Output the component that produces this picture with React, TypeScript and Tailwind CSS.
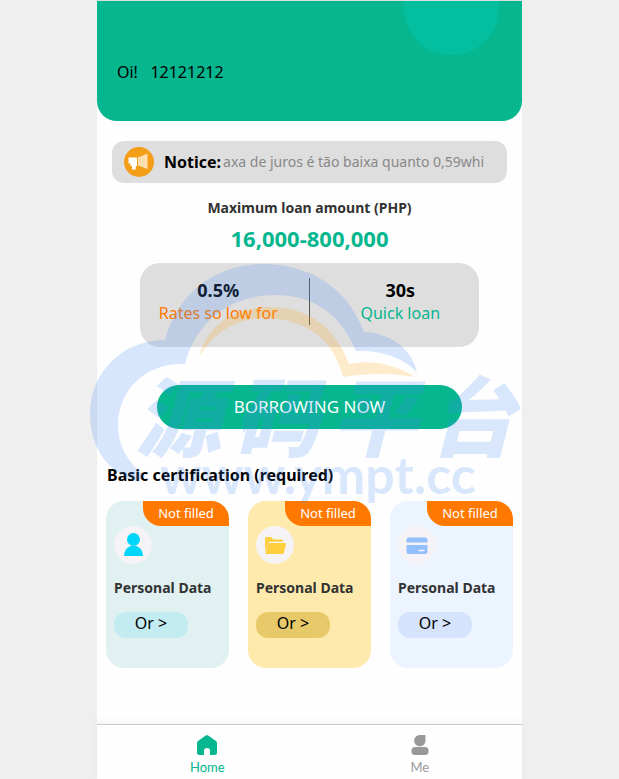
import React from "react";

type Certification = {
  id: string;
  card: string;
  pill: string;
  icon: React.ReactNode;
};

const certifications: Certification[] = [
  {
    id: "profile",
    card: "bg-[#e1f0f1]",
    pill: "bg-[#c3ecf2]",
    icon: (
      <svg viewBox="0 0 38 38" className="size-[38px]" fill="#00d5fa" aria-hidden="true">
        <circle cx="19.500" cy="13.500" r="6.500" />
        <path d="M10 30c.3-5.500 3-8.500 6.500-10h6c3.500 1.500 6.200 4.500 6.500 10z" />
      </svg>
    ),
  },
  {
    id: "documents",
    card: "bg-[#feeaad]",
    pill: "bg-[#e8c96a]",
    icon: (
      <svg viewBox="0 0 38 38" className="size-[38px]" fill="#ffcf40" aria-hidden="true">
        <path d="M9 25V12.500Q9 11 10.500 11H15l2.500 2.500h8.500q1 0 1 1.500v.7H14.500q-1.500 0-2 1.300z" />
        <path d="M13.500 17H29q1.300 0 1 1.200l-2 8.300q-.4 1.500-2 1.500H10.500q-1.300 0-1-1.200l2.300-8.500Q12.200 17 13.500 17z" />
      </svg>
    ),
  },
  {
    id: "bank",
    card: "bg-[#ebf4ff]",
    pill: "bg-[#d5e3fc]",
    icon: (
      <svg viewBox="0 0 38 38" className="size-[38px]" fill="#94bfff" aria-hidden="true">
        <path d="M8.500 16.500v-2.500q0-2.500 2.500-2.500h16q2.500 0 2.500 2.500v2.500z" />
        <path
          fillRule="evenodd"
          d="M8.500 19h21v6.500q0 2.500-2.500 2.500H11q-2.500 0-2.500-2.500zM20.500 23.700v1.600h6v-1.600z"
        />
      </svg>
    ),
  },
];

function NoticeBar() {
  return (
    <section className="mx-[15px] mt-5 flex h-[42px] items-center rounded-xl bg-[#dedede] pl-3 pr-4">
      <svg viewBox="0 0 30 30" className="mr-[10px] size-[30px] shrink-0" aria-hidden="true">
        <circle cx="15" cy="15" r="15" fill="#f49d16" />
        <path d="M4.500 10.500H13v8.500h-1.200v3.500H8V19H6.500v-2.500h-2z" fill="#fff" />
        <path d="M14 10.500l9.500-4v15.500L14 18.500z" fill="#fde0b0" />
      </svg>
      <strong className="mr-0.5 shrink-0 text-base font-bold">Notice:</strong>
      <span className="overflow-hidden whitespace-nowrap text-sm text-[#888]">
        axa de juros é tão baixa quanto 0,59whi
      </span>
    </section>
  );
}

function Card({ id, card, pill, icon }: Certification) {
  return (
    <article className={`h-[167px] overflow-hidden rounded-[18px] ${card}`}>
      <div className="ml-auto flex h-[25px] w-[86px] items-center justify-center rounded-bl-[18px] bg-[#ff7800] text-[13px] text-white">
        Not filled
      </div>
      <div className="px-2">
        <div className="size-[38px] rounded-full bg-[#f5f3f5]">{icon}</div>
        <h3 id={id} className="mt-3 whitespace-nowrap text-sm leading-6 font-bold text-[#333]">
          Personal Data
        </h3>
        <button
          aria-describedby={id}
          className={`mt-3 flex h-[26px] w-[74px] items-center justify-center rounded-xl pb-1 text-base ${pill}`}
        >
          Or &gt;
        </button>
      </div>
    </article>
  );
}

function Watermark() {
  return (
    <div className="pointer-events-none absolute top-[264px] -left-2 w-[440px] select-none" aria-hidden="true">
      <svg viewBox="89 264 440 224" className="block w-full">
        <path
          fill="#468cf5"
          fillOpacity=".21"
          d="M165 340C178 292 216 264 265 264C310 265 347 287 364 332C390 333 412 349 417 372C402 357 381 350 356 351C341 315 315 295 275 295C231 295 196 321 185 364C145 362 118 391 118 425C118 443 125 457 137 469L143 475L139 482C108 474 90 447 90 414C90 374 121 340 165 340Z"
        />
        <path
          fill="#ffa30f"
          fillOpacity=".21"
          d="M199 357C207 325 235 307 270 307C308 307 336 328 349 364C375 359 397 366 415 377C393 373 367 373 343 377C334 340 307 319 265 318C235 318 213 334 199 357Z"
        />
      </svg>
      <div className="absolute top-[106px] left-[46px] flex gap-3 whitespace-nowrap font-['Noto_Sans_CJK_SC',sans-serif] text-[86px] leading-[86px] font-black text-[#468cf5]/20 italic">
        <span>源</span>
        <span>码</span>
        <span>平</span>
        <span>台</span>
      </div>
      <div className="absolute top-[182px] left-[71px] whitespace-nowrap font-[Lato,sans-serif] text-[52px] leading-[56px] font-bold text-[#468cf5]/20">
        www.ympt.cc
      </div>
    </div>
  );
}

export default function App() {
  return (
    <div className="min-h-screen overflow-x-clip bg-[#efefef] font-['Noto_Sans','Noto_Sans_CJK_SC',sans-serif] text-black">
      <div className="relative mx-auto flex min-h-screen max-w-[425px] flex-col bg-[#fefefe]">
        <header className="relative flex h-[121px] items-center overflow-hidden rounded-b-[20px] border-t border-[#dedede] bg-[#05b68e] px-5 pt-[22px]">
          <div className="absolute -top-10 right-[23px] h-[94px] w-[95px] rounded-full bg-[#03bf9f]" />
          <h1 className="text-base">Oi!&nbsp;&nbsp; 12121212</h1>
        </header>

        <main className="flex-1">
          <NoticeBar />
          <section className="mt-[13px] text-center">
            <h2 className="text-sm leading-6 font-bold text-[#333]">Maximum loan amount (PHP)</h2>
            <p className="mt-1 text-[22px] leading-7 font-bold text-[#05b68e]">16,000-800,000</p>
          </section>

          <section className="mx-[43px] mt-[11px] grid h-[84px] grid-cols-2 rounded-[20px] bg-[#dedede] pt-[15px] text-center">
            <div className="h-[47px] border-r border-[#555] pr-3">
              <p className="text-lg leading-6 font-bold">0.5%</p>
              <p className="whitespace-nowrap text-base leading-[22px] text-[#ff7800]">Rates so low for</p>
            </div>
            <div className="pl-3">
              <p className="text-lg leading-6 font-bold">30s</p>
              <p className="text-base leading-[22px] text-[#05b68e]">Quick loan</p>
            </div>
          </section>

          <div className="mx-[60px] mt-[38px]">
            <button className="h-11 w-full rounded-full bg-[#05b68e] text-[17px] text-white">BORROWING NOW</button>
          </div>

          <h2 className="mt-[34px] px-[10px] text-base leading-6 font-bold">Basic certification (required)</h2>
          <section className="mt-[14px] grid grid-cols-3 gap-[19px] px-[9px]">
            {certifications.map((item) => (
              <Card key={item.id} {...item} />
            ))}
          </section>
        </main>

        <nav className="grid h-[55px] grid-cols-2 border-t border-[#c8c8c8] bg-[#fefefe] font-[Lato,sans-serif] text-[13px] leading-4 shadow-[0_-2px_8px_rgba(0,0,0,0.05)]">
          <a href="#home" className="flex flex-col items-center pt-[10px] pl-2 text-[#05b68e]">
            <svg viewBox="0 0 20 20" className="mb-1 size-5" fill="currentColor" aria-hidden="true">
              <path d="M8.800.5q1.200-.9 2.400 0L19 6q1 .8 1 2v9.500q0 2.500-2.500 2.500H13v-4a3 3 0 0 0-6 0v4H2.500Q0 20 0 17.500V8q0-1.200 1-2z" />
            </svg>
            Home
          </a>
          <a href="#me" className="flex flex-col items-center pt-[10px] pl-2 text-[#999]">
            <svg viewBox="0 0 20 20" className="mb-1 size-5" fill="currentColor" aria-hidden="true">
              <path d="M10 0h4.500q1 0 1 1v5a5.700 5.700 0 1 1-5.500-6z" />
              <rect x="1.500" y="12" width="17" height="8" rx="3.500" />
            </svg>
            Me
          </a>
        </nav>
        <Watermark />
      </div>
    </div>
  );
}
